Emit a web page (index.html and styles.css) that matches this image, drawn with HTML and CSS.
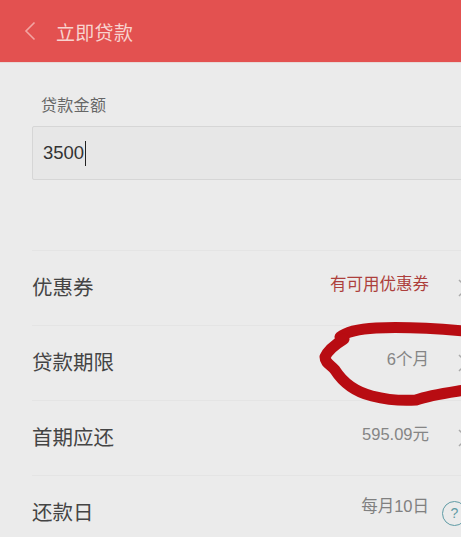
FILE: index.html
```
<!DOCTYPE html>
<html lang="zh-CN">
<head>
    <meta charset="UTF-8">
    <meta name="viewport" content="width=device-width, initial-scale=1.0">
    <title>立即贷款</title>
    <link rel="stylesheet" href="styles.css">
</head>
<body>

<div class="page">
    <!-- Header -->
    <div class="header">
        <svg class="back" width="12" height="20" viewBox="0 0 12 20">
            <path d="M10.5 1.5 L2 10 L10.5 18.5" fill="none" stroke="#f2a5a2" stroke-width="1.6"/>
        </svg>
        <span class="title">立即贷款</span>
    </div>

    <!-- Amount -->
    <div class="amount">
        <div class="amount-label">贷款金额</div>
        <div class="amount-input"><span>3500</span><i class="caret"></i></div>
    </div>

    <!-- Rows -->
    <div class="rows">
        <div class="row">
            <span class="row-name">优惠券</span>
            <span class="row-value coupon">有可用优惠券</span>
            <svg class="chevron" width="12" height="18" viewBox="0 0 12 18"><path d="M1 1 L9 9 L1 17" fill="none" stroke="#aaa" stroke-width="1.5"/></svg>
        </div>
        <div class="row">
            <span class="row-name">贷款期限</span>
            <span class="row-value">6个月</span>
            <svg class="chevron" width="12" height="18" viewBox="0 0 12 18"><path d="M1 1 L9 9 L1 17" fill="none" stroke="#aaa" stroke-width="1.5"/></svg>
        </div>
        <div class="row">
            <span class="row-name">首期应还</span>
            <span class="row-value">595.09元</span>
            <svg class="chevron" width="12" height="18" viewBox="0 0 12 18"><path d="M1 1 L9 9 L1 17" fill="none" stroke="#aaa" stroke-width="1.5"/></svg>
        </div>
        <div class="row">
            <span class="row-name">还款日</span>
            <span class="row-value raised">每月10日</span>
            <span class="help">?</span>
        </div>
    </div>

    <!-- Hand drawn circle on top of the screenshot -->
    <svg class="scribble" width="461" height="537" viewBox="0 0 461 537">
        <path d="M465 331 C430 328 400 327 376 328 C358 329 346 332 340 337" fill="none" stroke="#b80c12" stroke-width="11" stroke-linecap="round"/>
        <path d="M344 339 C336 344 328 350 325 357 C325 363 331 365 335 370 C342 381 352 391 372 396 C388 400 402 401 416 400 C430 395 446 393 465 390" fill="none" stroke="#b80c12" stroke-width="11" stroke-linecap="round" stroke-linejoin="round"/>
    </svg>
</div>

</body>
</html>
```

FILE: styles.css
```
body {
    margin: 0;
    font-family: "Liberation Sans", "Noto Sans CJK SC", sans-serif;
    background-color: #ebebeb;
}
.page {
    position: relative;
    width: 461px;
    height: 537px;
    overflow: hidden;
}
.header {
    display: flex;
    align-items: center;
    height: 63px;
    padding-left: 24px;
    background-color: #e35150;
    border-bottom: 1px solid #e6d9d7;
    box-sizing: border-box;
}
.back {
    margin-right: 20px;
}
.title {
    font-size: 19px;
    letter-spacing: 0.3px;
    color: #f8d3cf;
}
.amount {
    height: 187px;
    padding: 33px 0 0 32px;
    box-sizing: border-box;
}
.amount-label {
    height: 30px;
    padding-left: 9px;
    font-size: 16px;
    letter-spacing: 0.3px;
    line-height: 20px;
    color: #666;
}
.amount-input {
    display: flex;
    align-items: center;
    height: 54px;
    margin-right: -10px;
    padding-left: 10px;
    font-size: 18.5px;
    color: #333;
    background-color: #e7e7e7;
    border: 1px solid #d6d6d6;
    border-radius: 2px;
    box-sizing: border-box;
}
.caret {
    width: 1px;
    height: 25px;
    margin-left: 1px;
    background-color: #222;
}
.rows {
    margin-left: 32px;
}
.row {
    display: flex;
    align-items: center;
    height: 75px;
    border-top: 1px solid #e4e4e4;
    box-sizing: border-box;
}
.row-name {
    flex: 1;
    margin-top: -4px;
    font-size: 20.5px;
    color: #444;
}
.row-value {
    margin: -10px 29px 0 0;
    font-size: 16.5px;
    color: #858585;
}
.coupon {
    color: #ad3f3c;
}
.raised {
    margin: -16px 13px 0 0;
    color: #808080;
}
.chevron {
    flex-shrink: 0;
    margin-right: -9px;
}
.help {
    flex-shrink: 0;
    width: 23px;
    height: 23px;
    margin-right: -6px;
    font-size: 14px;
    line-height: 23px;
    text-align: center;
    color: #5f9ba5;
    border: 1px solid #5f9ba5;
    border-radius: 50%;
}
.scribble {
    position: absolute;
    top: 0;
    left: 0;
}
```
